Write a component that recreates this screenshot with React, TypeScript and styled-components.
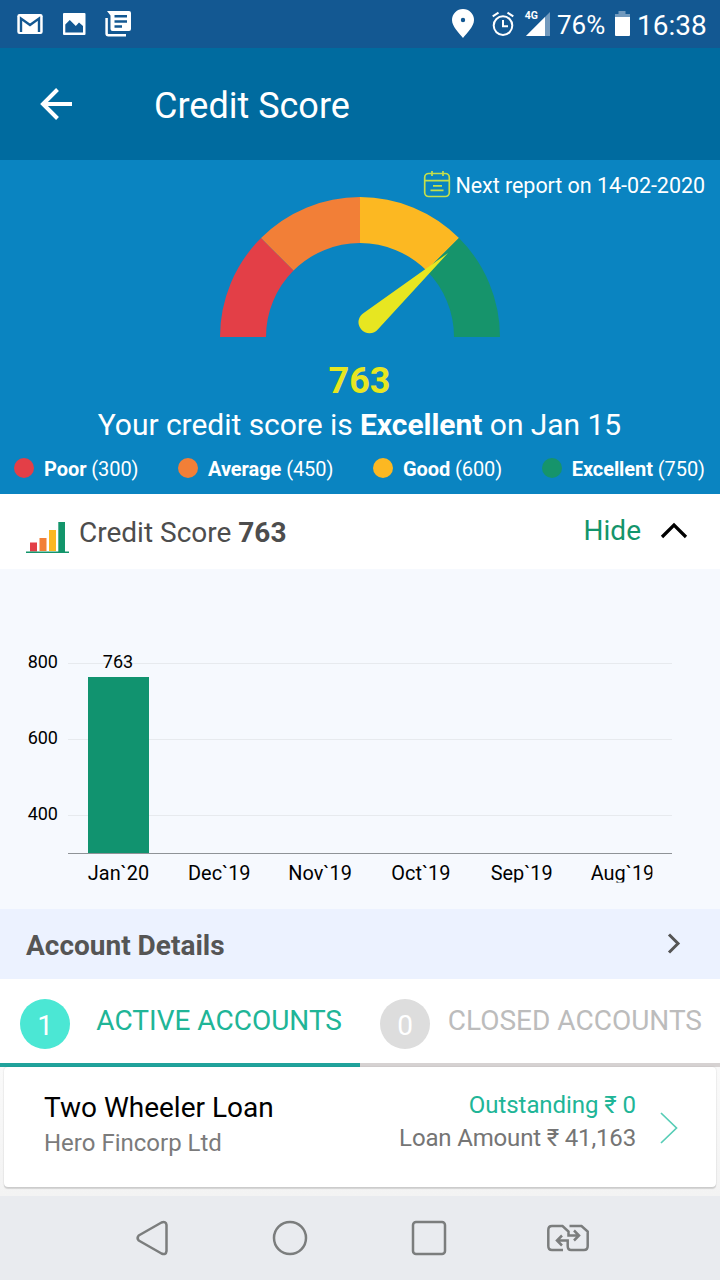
import React from 'react';
import styled, { createGlobalStyle } from 'styled-components';

const GlobalStyle = createGlobalStyle`
  * { box-sizing: border-box; }
  body { margin: 0; background: #f3f3f3; font-family: Roboto, "Liberation Sans", sans-serif; }
  svg { display: block; flex: none; }
`;

const palette = {
  poor: '#e33f47',
  average: '#f27f37',
  good: '#fcb822',
  excellent: '#16946b',
  needle: '#e7e621',
  teal: '#20b597',
};

const Screen = styled.div`
  width: 720px;
  height: 1280px;
  display: flex;
  flex-direction: column;
  overflow: hidden;
`;

const StatusBar = styled.div`
  height: 48px;
  flex: none;
  display: flex;
  justify-content: space-between;
  background: #135892;
  color: #fff;
`;

const StatusText = styled.span<{ $size: number; $width: number }>`
  width: ${(p) => p.$width}px;
  font-size: ${(p) => p.$size}px;
  line-height: 51px;
  white-space: nowrap;
`;

const StatusGroup = styled.div`
  display: flex;
`;

const AppBar = styled.header`
  height: 112px;
  flex: none;
  display: flex;
  align-items: center;
  padding: 0 40px;
  gap: 82px;
  background: #006b9f;
  color: #fff;
`;

const Title = styled.h1`
  margin: 3px 0 0;
  font-size: 36px;
  font-weight: 400;
  line-height: 44px;
`;

const ScorePanel = styled.section`
  height: 334px;
  flex: none;
  display: flex;
  flex-direction: column;
  align-items: center;
  background: #0a84c1;
  color: #fff;
`;

const NextReport = styled.div`
  align-self: stretch;
  height: 37px;
  padding: 10px 15px 0 0;
  display: flex;
  justify-content: flex-end;
  align-items: flex-start;
  gap: 4px;
  font-size: 21.5px;
  letter-spacing: -0.05px;
  line-height: 32px;
`;

const ScoreValue = styled.div`
  margin: 22px 1px 0 0;
  font-size: 36px;
  font-weight: 700;
  line-height: 44px;
  color: ${palette.needle};
`;

const Summary = styled.div`
  margin: 4px 1px 0 0;
  font-size: 30px;
  letter-spacing: -0.04px;
  line-height: 36px;
  white-space: nowrap;
`;

const Legend = styled.div`
  align-self: stretch;
  margin-top: 13px;
  padding: 0 15px 0 14px;
  display: flex;
  justify-content: space-between;
`;

const LegendItem = styled.div<{ $color: string }>`
  display: flex;
  gap: 10px;
  font-size: 20px;
  letter-spacing: -0.07px;
  line-height: 26px;
  white-space: nowrap;

  &::before {
    content: '';
    width: 20px;
    height: 20px;
    margin-top: 2px;
    border-radius: 50%;
    background: ${(p) => p.$color};
  }
`;

const HistoryHeader = styled.div`
  height: 75px;
  flex: none;
  display: flex;
  align-items: flex-start;
  padding: 0 32px 0 26px;
  background: #fff;
  color: #4d4d4d;
  font-size: 28px;
  line-height: 78px;
`;

const BarsIcon = styled.svg`
  margin: 27px 10px 0 0;
`;

const HideToggle = styled.div`
  margin-left: auto;
  display: flex;
  gap: 19px;
  line-height: 74px;
  color: #13956b;

  svg { margin-top: 27px; }
`;

const ChartPanel = styled.section`
  height: 340px;
  flex: none;
  background: #f6f9fe;
`;

const DetailsHeader = styled.div`
  height: 70px;
  flex: none;
  display: flex;
  justify-content: space-between;
  align-items: center;
  padding: 0 39px 0 26px;
  background: #ecf2ff;
  color: #555;
  font-size: 28px;
  font-weight: 700;
  line-height: 32px;

  span { margin-top: 3px; }
`;

const Tabs = styled.div`
  height: 88px;
  flex: none;
  display: grid;
  grid-template-columns: 1fr 1fr;
`;

const Tab = styled.div<{ $active?: boolean }>`
  display: flex;
  padding: 20px 18px 0 20px;
  justify-content: space-between;
  background: #fff;
  border-bottom: 4px solid ${(p) => (p.$active ? '#20a39c' : '#d6d2d2')};
  color: ${(p) => (p.$active ? palette.teal : '#bcbcbc')};
  font-size: 28px;
  line-height: 43px;
  white-space: nowrap;
`;

const Count = styled.span<{ $active?: boolean }>`
  width: 50px;
  height: 50px;
  border-radius: 50%;
  background: ${(p) => (p.$active ? '#4be7d4' : '#dddddd')};
  color: #fff;
  line-height: 54px;
  text-align: center;
`;

const AccountList = styled.div`
  height: 129px;
  flex: none;
  padding: 0 4px;
  background: linear-gradient(#fafafa, #f3f3f3);
`;

const AccountCard = styled.article`
  height: 120px;
  display: flex;
  justify-content: space-between;
  padding: 0 38px 0 40px;
  border-radius: 4px;
  background: #fff;
  box-shadow: 0 2px 1px rgba(0, 0, 0, 0.13), 0 0 2px rgba(0, 0, 0, 0.14);
`;

const AccountName = styled.div`
  margin-top: 23px;
  font-size: 28px;
  line-height: 36px;
  color: #000;
`;

const Lender = styled.div`
  margin-top: 1px;
  font-size: 24px;
  line-height: 32px;
  color: #7b7b7b;
`;

const Amounts = styled.div`
  margin: 22px 24px 0 auto;
  text-align: right;
  font-size: 24px;
  line-height: 33px;
`;

const Outstanding = styled.div`
  letter-spacing: -0.06px;
  color: ${palette.teal};
`;

const LoanAmount = styled.div`
  letter-spacing: -0.16px;
  color: #757575;
`;

const NavBar = styled.nav`
  height: 84px;
  flex: none;
  display: flex;
  gap: 95px;
  padding: 20px 0 0 130px;
  background: #e9ebef;
`;

const levels = [
  { name: 'Poor', from: 300, color: palette.poor },
  { name: 'Average', from: 450, color: palette.average },
  { name: 'Good', from: 600, color: palette.good },
  { name: 'Excellent', from: 750, color: palette.excellent },
];

const months = ['Jan`20', 'Dec`19', 'Nov`19', 'Oct`19', 'Sep`19', 'Aug`19'];

function NotificationIcons() {
  return (
    <svg width="140" height="48" viewBox="0 0 140 48">
      <rect x="17.3" y="14" width="25.4" height="20" rx="2.2" fill="#fff" />
      <path d="M21 32V18.5L30 25l9-6.500V32" fill="none" stroke="#135892" strokeWidth="2.4" />
      <path fillRule="evenodd" fill="#fff" d="M64 13h20.500a1 1 0 0 1 1 1v20a1 1 0 0 1-1 1H64a1 1 0 0 1-1-1V14a1 1 0 0 1 1-1ZM65.300 24.500V32.500H83V26L79 22.500L75.800 26L69.800 20Z" />
      <path fillRule="evenodd" fill="#fff" d="M107 11h22a2 2 0 0 1 2 2v16a2 2 0 0 1-2 2h-16.500a2 2 0 0 1-2-2V15.500ZM114.500 15v2.500H127V15ZM114.500 20.300v2.500H127v-2.500ZM114.500 25.300v2.400h7.500v-2.400Z" />
      <path d="M106.600 18V33.500a1.700 1.700 0 0 0 1.700 1.700H126" fill="none" stroke="#fff" strokeWidth="2.500" />
    </svg>
  );
}

function SystemIcons() {
  return (
    <svg width="107" height="48" viewBox="450 0 107 48">
      <path fillRule="evenodd" fill="#fff" d="M463 9a11 11 0 0 1 11 11c0 6.500-7 13-11 18c-4-5-11-11.500-11-18a11 11 0 0 1 11-11Zm0 8.800a2.200 2.200 0 1 0 0 4.400a2.200 2.200 0 0 0 0-4.400Z" />
      <circle cx="503" cy="25.600" r="9.300" fill="none" stroke="#fff" strokeWidth="2" />
      <path d="M503 20v6.300h5M492.700 16.300l5.800-3.600M513.300 16.300l-5.800-3.600" fill="none" stroke="#fff" strokeWidth="2" />
      <path d="M526 36L550 12v24Z" fill="#7199bd" />
      <path d="M526 36L545 17v19Z" fill="#fff" />
      <text x="524.700" y="19" fontSize="10.500" fontWeight="700" fill="#fff">4G</text>
    </svg>
  );
}

function Gauge() {
  return (
    <svg width="280" height="140" viewBox="-140 -140 280 140">
      <path fill={palette.poor} d="M-140 0A140 140 0 0 1-98.995-98.995L-66.468-66.468A94 94 0 0 0-94 0Z" />
      <path fill={palette.average} d="M-98.995-98.995A140 140 0 0 1 0-140V-94A94 94 0 0 0-66.468-66.468Z" />
      <path fill={palette.good} d="M0-140A140 140 0 0 1 98.995-98.995L66.468-66.468A94 94 0 0 0 0-94Z" />
      <path fill={palette.excellent} d="M98.995-98.995A140 140 0 0 1 140 0H94A94 94 0 0 0 66.468-66.468Z" />
      <path fill={palette.needle} d="M4-24.300L88-84L18-7.800A11 11 0 1 1 4-24.300Z" />
    </svg>
  );
}

function HistoryChart() {
  return (
    <svg width="720" height="340" viewBox="0 569 720 340">
      <clipPath id="labels">
        <rect x="68" y="855" width="584.500" height="27.500" />
      </clipPath>
      {[800, 600, 400].map((value, i) => (
        <React.Fragment key={value}>
          <rect x="68" y={663 + i * 76} width="604" height="1" fill="#e7eaee" />
          <text x="58" y={668 + i * 76} fontSize="18" textAnchor="end">{value}</text>
        </React.Fragment>
      ))}
      <rect x="88" y="677" width="61" height="176" fill="#11936f" />
      <text x="118" y="668" fontSize="18" textAnchor="middle">763</text>
      <rect x="68" y="853" width="604" height="1" fill="#8f9397" />
      <g clipPath="url(#labels)" fontSize="19.900" textAnchor="middle">
        {months.map((month, i) => (
          <text key={month} x={118.5 + i * 100.800} y="880">{month}</text>
        ))}
      </g>
    </svg>
  );
}

export default function App() {
  return (
    <Screen>
      <GlobalStyle />
      <StatusBar>
        <NotificationIcons />
        <StatusGroup>
          <SystemIcons />
          <StatusText $size={26} $width={58}>76%</StatusText>
          <svg width="22" height="48" viewBox="615 0 22 48">
            <path d="M618.500 11h7v3h4.500v4h-15v-4h3.500Z" fill="#7199bd" />
            <path d="M615 17h15v18a1 1 0 0 1-1 1h-13a1 1 0 0 1-1-1Z" fill="#fff" />
          </svg>
          <StatusText $size={28} $width={83}>16:38</StatusText>
        </StatusGroup>
      </StatusBar>

      <AppBar>
        <svg width="32" height="32" viewBox="0 0 32 32">
          <path d="M32 16H3M17.500 1.500L3 16l14.500 14.500" fill="none" stroke="#fff" strokeWidth="4" />
        </svg>
        <Title>Credit Score</Title>
      </AppBar>

      <ScorePanel>
        <NextReport>
          <svg width="28" height="28" viewBox="0 0 28 28" fill="none" stroke="#c5df4b" strokeWidth="1.700">
            <rect x="1.700" y="3.500" width="24.600" height="23" rx="4" />
            <path d="M2 10.700h24M9 1v5M20 1v5M10 15.800h9M7.500 20.300h13" />
          </svg>
          Next report on 14-02-2020
        </NextReport>
        <Gauge />
        <ScoreValue>763</ScoreValue>
        <Summary>Your credit score is <b>Excellent</b> on Jan 15</Summary>
        <Legend>
          {levels.map((level) => (
            <LegendItem key={level.name} $color={level.color}>
              <span><b>{level.name}</b> ({level.from})</span>
            </LegendItem>
          ))}
        </Legend>
      </ScorePanel>

      <HistoryHeader>
        <BarsIcon width="43" height="32" viewBox="0 0 43 32">
          <rect x="4" y="21.500" width="7" height="9" fill={palette.poor} />
          <rect x="13.500" y="17" width="7" height="13" fill={palette.average} />
          <rect x="23" y="9" width="7" height="21" fill={palette.good} />
          <rect x="32.300" y="1" width="6.700" height="30" fill="#13956b" />
          <rect x="0" y="30.500" width="43" height="1.500" fill="#13956b" />
        </BarsIcon>
        <span>Credit Score <b>763</b></span>
        <HideToggle>
          Hide
          <svg width="28" height="18" viewBox="0 0 28 18">
            <path d="M2 16L14 4l12 12" fill="none" stroke="#000" strokeWidth="3.200" />
          </svg>
        </HideToggle>
      </HistoryHeader>

      <ChartPanel>
        <HistoryChart />
      </ChartPanel>

      <DetailsHeader>
        <span>Account Details</span>
        <svg width="14" height="22" viewBox="0 0 14 22">
          <path d="M2 1.500L11 10.500L2 19.500" fill="none" stroke="#555" strokeWidth="3" />
        </svg>
      </DetailsHeader>

      <Tabs>
        <Tab $active><Count $active>1</Count>ACTIVE ACCOUNTS</Tab>
        <Tab><Count>0</Count>CLOSED ACCOUNTS</Tab>
      </Tabs>

      <AccountList>
        <AccountCard>
          <div>
            <AccountName>Two Wheeler Loan</AccountName>
            <Lender>Hero Fincorp Ltd</Lender>
          </div>
          <Amounts>
            <Outstanding>Outstanding ₹ 0</Outstanding>
            <LoanAmount>Loan Amount ₹ 41,163</LoanAmount>
          </Amounts>
          <svg width="18" height="120" viewBox="0 0 18 120">
            <path d="M1 46L16.500 61L1 76" fill="none" stroke="#57cdb6" strokeWidth="1.700" />
          </svg>
        </AccountCard>
      </AccountList>

      <NavBar>
        <svg width="44" height="44" viewBox="0 0 44 44" fill="none" stroke="#7b7d7d" strokeWidth="2.500" strokeLinejoin="round">
          <path d="M8.700 19.500L31.500 6.500Q36 5 36.500 9V35Q36 39.500 31.500 37.500L8.700 24.500Q6.500 22 8.700 19.500Z" />
        </svg>
        <svg width="44" height="44" viewBox="0 0 44 44" fill="none" stroke="#7b7d7d" strokeWidth="2.500">
          <circle cx="21" cy="22" r="16" />
        </svg>
        <svg width="44" height="44" viewBox="0 0 44 44" fill="none" stroke="#7b7d7d" strokeWidth="2.500">
          <rect x="5" y="6" width="32" height="32" rx="3" />
        </svg>
        <svg width="44" height="44" viewBox="0 0 44 44" fill="none" stroke="#7b7d7d" strokeWidth="2.500">
          <path d="M16 34H5Q1.300 34 1.300 30V14Q1.300 10 5 10H15.500L21.500 15.500V19.500H31.500M27 14.500L32 19.500L27 24.500M22.500 10H34.500L40.700 15.500V30Q40.700 34 37 34H24Q20.700 34 20.700 30V24.500H10.500M15 19.500L10 24.500L15 29.500" />
        </svg>
      </NavBar>
    </Screen>
  );
}
